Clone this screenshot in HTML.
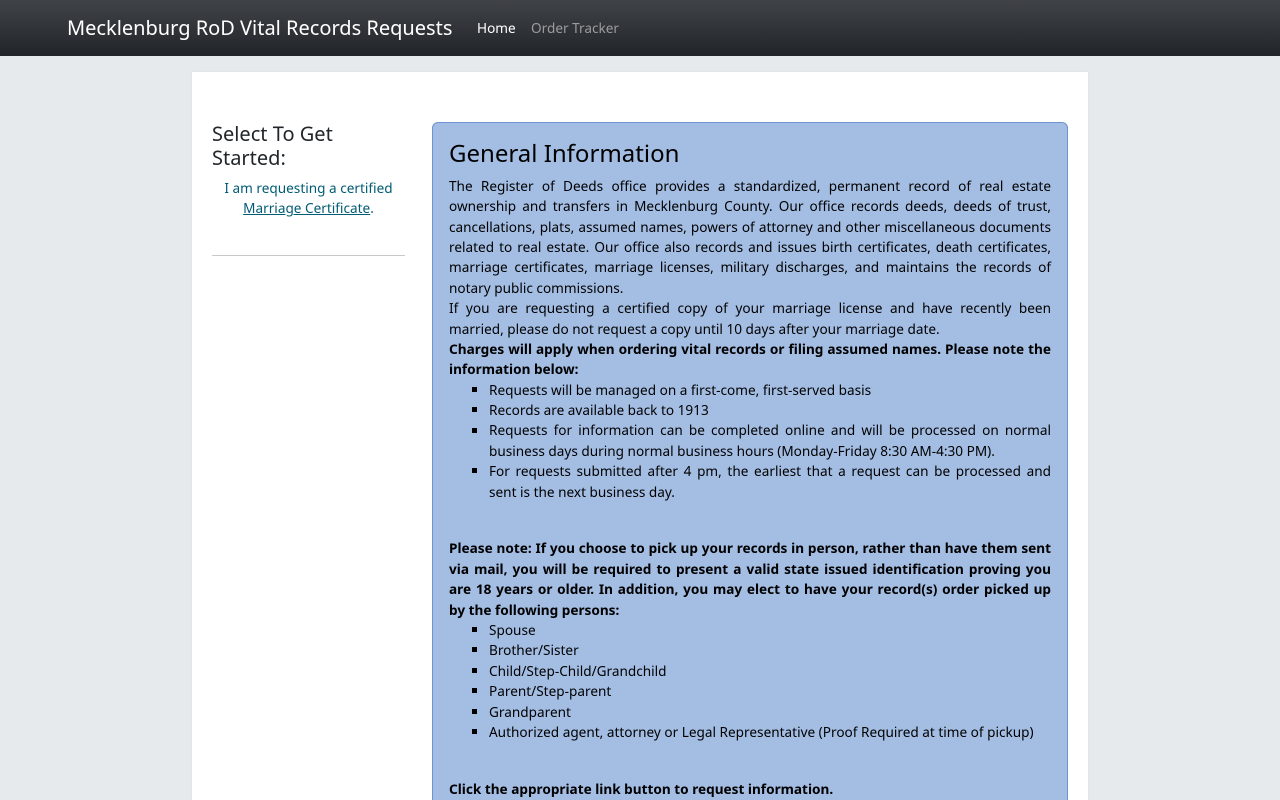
<!DOCTYPE html>
<html lang="en">
<head>
<meta charset="utf-8">
<title>Mecklenburg RoD Vital Records Requests</title>
<style>
*{box-sizing:border-box}
html,body{margin:0;padding:0;height:800px;overflow:hidden}
body{background:#e7eaed;font-family:"Noto Sans","Open Sans","DejaVu Sans",sans-serif;font-size:13.6px;line-height:20.4px;color:#000;position:relative}
nav{position:absolute;left:0;top:0;width:1280px;height:56px;background:linear-gradient(#404348,#212529)}
.brand{position:absolute;left:67px;top:13px;font-size:20px;line-height:30px;color:#fff;white-space:nowrap}
.nl{position:absolute;top:18px;font-size:13.6px;line-height:20px;white-space:nowrap}
.main{position:absolute;left:192px;top:72px;width:896px;height:728px;background:#fff;box-shadow:0 0 3px rgba(0,0,0,.05)}
.side{position:absolute;left:20px;top:50px;width:193px}
.side h4{margin:0;font-weight:400;font-size:20px;line-height:24px;color:#212529}
.side p{margin:8px 0 0;text-align:center;color:#005b74}
.side a{color:#005b74;text-decoration:underline}
.side hr{margin:36px 0 0;border:0;border-top:1px solid #c9c9c9}
.panel{position:absolute;left:240px;top:50px;width:636px;height:678px;background:#a3bde3;border:1px solid #6f93d2;border-bottom:0;border-radius:6px 6px 0 0;padding:14px 16px 0}
.panel h3{margin:0 0 4.72px;font-weight:400;font-size:24px;line-height:34px;color:#000}
.panel .j{text-align:justify}
.panel b{font-weight:700}
.panel ul{margin:0;padding:0 0 0 40px;list-style:square;text-align:justify}
.gap{height:36.08px}
.gap2{height:36.5px}
.up{position:relative;top:-1px}
</style>
</head>
<body>
<nav>
<div class="brand">Mecklenburg RoD Vital Records Requests</div>
<div class="nl" style="left:477px;color:#fff">Home</div>
<div class="nl" style="left:531px;color:#9a9c9e">Order Tracker</div>
</nav>
<div class="main">
<div class="side">
<h4>Select To Get Started:</h4>
<p>I am requesting a certified <a href="#">Marriage Certificate</a>.</p>
<hr>
</div>
<div class="panel">
<h3>General Information</h3>
<div class="j">The Register of Deeds office provides a standardized, permanent record of real estate ownership and transfers in Mecklenburg County. Our office records deeds, deeds of trust, cancellations, plats, assumed names, powers of attorney and other miscellaneous documents related to real estate. Our office also records and issues birth certificates, death certificates, marriage certificates, marriage licenses, military discharges, and maintains the records of notary public commissions.</div>
<div class="j">If you are requesting a certified copy of your marriage license and have recently been married, please do not request a copy until 10 days after your marriage date.</div>
<div class="j"><b>Charges will apply when ordering vital records or filing assumed names. Please note the information below:</b></div>
<ul>
<li>Requests will be managed on a first-come, first-served basis</li>
<li>Records are available back to 1913</li>
<li><span class="up">Requests for information can be completed online and will be processed on normal</span> business days during normal business hours (Monday-Friday 8:30 AM-4:30 PM).</li>
<li>For requests submitted after 4 pm, the earliest that a request can be processed and sent is the next business day.</li>
</ul>
<div class="gap"></div>
<div class="j"><b>Please note: If you choose to pick up your records in person, rather than have them sent via mail, you will be required to present a valid state issued identification proving you are 18 years or older. In addition, you may elect to have your record(s) order picked up by&nbsp;the following persons:</b></div>
<ul>
<li>Spouse</li>
<li>Brother/Sister</li>
<li>Child/Step-Child/Grandchild</li>
<li>Parent/Step-parent</li>
<li>Grandparent</li>
<li>Authorized agent, attorney or Legal Representative (Proof Required at time of pickup)</li>
</ul>
<div class="gap2"></div>
<div><b>Click the appropriate link button to request information.</b></div>
</div>
</div>
</body>
</html>
